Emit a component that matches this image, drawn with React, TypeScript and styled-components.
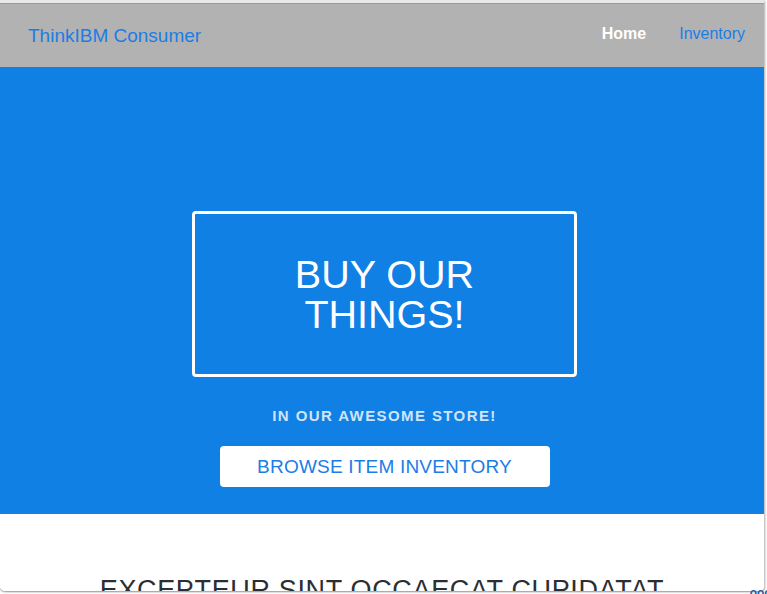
import React from "react";
import styled, { createGlobalStyle } from "styled-components";

const Global = createGlobalStyle`
  html, body { margin: 0; padding: 0; background: #ffffff; }
  body { font-family: "Liberation Sans", Arial, sans-serif; }
  * { box-sizing: border-box; }
`;

const Stage = styled.div`
  position: relative;
  width: 767px;
  height: 594px;
  overflow: hidden;
  background: #ffffff;
`;

const Window = styled.div`
  width: 765px;
  height: 591px;
  overflow: hidden;
  border-top: 3px solid #e8e8e8;
  border-right: 1px solid #c8c8c8;
  border-radius: 0 0 5px 5px;
  box-shadow: 0 1px 2px rgba(0, 0, 0, 0.45);
  display: flex;
  flex-direction: column;
  background: #ffffff;
`;

const Header = styled.header`
  height: 64px;
  flex: none;
  background: #b2b2b2;
  border-top: 1px solid #9a9a9a;
  display: flex;
  align-items: center;
  justify-content: space-between;
  padding: 0 19px 0 28px;
`;

const Brand = styled.a`
  font-size: 19px;
  color: #1b7de6;
  text-decoration: none;
  margin-top: 1px;
`;

const Nav = styled.nav`
  display: flex;
  gap: 33px;
  margin-top: -4px;
`;

const NavLink = styled.a<{ $active?: boolean }>`
  font-size: 16px;
  color: ${(p) => (p.$active ? "#ffffff" : "#1b7de6")};
  font-weight: ${(p) => (p.$active ? 600 : 400)};
  text-decoration: none;
`;

const Hero = styled.section`
  height: 447px;
  flex: none;
  background: #1080e5;
  display: flex;
  flex-direction: column;
  align-items: center;
  padding-top: 144px;
  padding-left: 5px;
`;

const TitleBox = styled.div`
  width: 385px;
  height: 166px;
  border: 3px solid #ffffff;
  border-radius: 4px;
  display: flex;
  align-items: center;
  justify-content: center;
  text-align: center;
  color: #ffffff;
  font-size: 39.5px;
  line-height: 40px;
  font-weight: 300;
`;

const Tagline = styled.p`
  margin: 30px 0 0;
  font-size: 15px;
  font-weight: 700;
  letter-spacing: 1.4px;
  color: #cfe4fb;
`;

const BrowseButton = styled.a`
  margin-top: 22px;
  width: 330px;
  height: 41px;
  background: #ffffff;
  border-radius: 4px;
  display: flex;
  align-items: center;
  justify-content: center;
  font-size: 19px;
  letter-spacing: 0.2px;
  color: #1b7de6;
  text-decoration: none;
`;

const Section = styled.section`
  flex: 1;
  background: #ffffff;
  display: flex;
  justify-content: center;
  padding-top: 61px;
`;

const SectionTitle = styled.h2`
  margin: 0;
  font-size: 27px;
  font-weight: 400;
  letter-spacing: 0.65px;
  color: #2b2f33;
  white-space: nowrap;
`;

const Peek = styled.span`
  position: absolute;
  right: -4px;
  bottom: -6px;
  font-size: 12px;
  font-weight: 700;
  color: #2b5ea8;
`;

export default function App() {
  return (
    <>
      <Global />
      <Stage>
        <Window>
          <Header>
            <Brand href="#">ThinkIBM Consumer</Brand>
            <Nav>
              <NavLink href="#" $active>
                Home
              </NavLink>
              <NavLink href="#">Inventory</NavLink>
            </Nav>
          </Header>
          <Hero>
            <TitleBox>
              BUY OUR
              <br />
              THINGS!
            </TitleBox>
            <Tagline>IN OUR AWESOME STORE!</Tagline>
            <BrowseButton href="#">BROWSE ITEM INVENTORY</BrowseButton>
          </Hero>
          <Section>
            <SectionTitle>EXCEPTEUR SINT OCCAECAT CUPIDATAT</SectionTitle>
          </Section>
        </Window>
        <Peek>ooc</Peek>
      </Stage>
    </>
  );
}
